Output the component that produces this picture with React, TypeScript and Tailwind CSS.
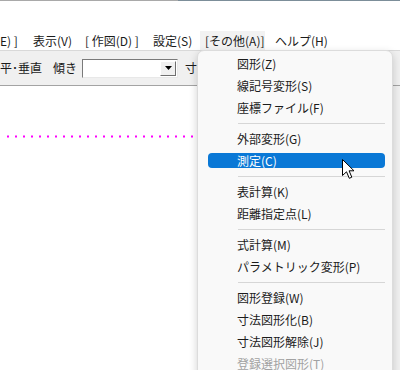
import React from "react";

type Item = { t: "i"; label: string; hl?: boolean; dis?: boolean } | { t: "s" };

const items: Item[] = [
  { t: "i", label: "図形(Z)" },
  { t: "i", label: "線記号変形(S)" },
  { t: "i", label: "座標ファイル(F)" },
  { t: "s" },
  { t: "i", label: "外部変形(G)" },
  { t: "i", label: "測定(C)", hl: true },
  { t: "s" },
  { t: "i", label: "表計算(K)" },
  { t: "i", label: "距離指定点(L)" },
  { t: "s" },
  { t: "i", label: "式計算(M)" },
  { t: "i", label: "パラメトリック変形(P)" },
  { t: "s" },
  { t: "i", label: "図形登録(W)" },
  { t: "i", label: "寸法図形化(B)" },
  { t: "i", label: "寸法図形解除(J)" },
  { t: "i", label: "登録選択図形(T)", dis: true },
];

export default function App() {
  return (
    <div className="relative w-[400px] h-[370px] overflow-hidden bg-white font-['Noto_Sans_CJK_JP','Noto_Sans',sans-serif] text-[12px] text-[#1b1b1b]">
      <div className="flex h-px">
        <div className="w-[178px] bg-[#a9a9a9]" />
        <div className="flex-1 bg-[#7c8e99]" />
      </div>
      <div className="h-[30px]" />
      {/* menu bar */}
      <div className="flex h-[19px] items-center leading-[19px] whitespace-nowrap">
        <div className="w-[33px] pl-0">E) ]</div>
        <div className="w-[52px]">表示(V)</div>
        <div className="w-[68px]">[ 作図(D) ]</div>
        <div className="w-[47px]">設定(S)</div>
        <div className="w-[65px] h-[19px] bg-[#f2f2f2] pl-[5px]">[その他(A)]</div>
        <div className="pl-[10px]">ヘルプ(H)</div>
      </div>
      {/* toolbar */}
      <div className="flex h-[36px] items-center border-t border-[#d9d9d9] border-b border-b-[#a3a3a3] bg-[#f0f0f0] whitespace-nowrap">
        <div className="w-[53px]">平･垂直</div>
        <div className="w-[29px]">傾き</div>
        <div className="flex h-[19px] w-[96px] border border-t-[#7a7a7a] border-l-[#7a7a7a] border-r-[#e8e8e8] border-b-[#e8e8e8] bg-white">
          <div className="flex-1" />
          <div className="m-[1px] flex w-[16px] items-center justify-center border border-t-[#ffffff] border-l-[#ffffff] border-r-[#6f6f6f] border-b-[#6f6f6f] bg-[#f0f0f0]">
            <svg width="7" height="4" viewBox="0 0 7 4"><path d="M0 0H7L3.5 4Z" fill="#000" /></svg>
          </div>
        </div>
        <div className="pl-[7px]">寸法</div>
      </div>
      {/* canvas */}
      <div className="flex h-[284px]">
        <div className="flex-1">
          <svg width="200" height="4" className="mt-[49px]">
            <line x1="7" y1="1.5" x2="200" y2="1.5" stroke="#ff00ff" strokeWidth="2" strokeDasharray="2 6" />
          </svg>
        </div>
        <div className="w-[7px] bg-[#f0f0f0]" />
      </div>

      {/* dropdown menu */}
      <div className="absolute left-[197px] top-[50px] w-[196px] h-[340px] rounded-t-[7px] border border-[#dcdcdc] bg-[#f9f9f9] pt-[2px] shadow-[0_3px_8px_rgba(0,0,0,0.18)]">
        {items.map((it, i) =>
          it.t === "s" ? (
            <div key={i} className="flex h-[9px] items-center pl-[40px] pr-[7px]">
              <div className="h-px w-full bg-[#d6d6d6]" />
            </div>
          ) : (
            <div key={i} className="relative h-[22px]">
              {it.hl && <div className="absolute left-[10px] right-[7px] top-[3px] h-[15px] rounded-[4px] bg-[#0a78d6]" />}
              <div
                className={
                  "relative pl-[39px] leading-[22px] whitespace-nowrap " +
                  (it.hl ? "text-white" : it.dis ? "text-[#a2a2a2]" : "text-[#1b1b1b]")
                }
              >
                {it.label}
              </div>
            </div>
          )
        )}
      </div>

      {/* mouse cursor */}
      <svg className="absolute left-[342px] top-[159px]" width="14" height="21" viewBox="0 0 14 21">
        <path d="M0.5 0.5 L0.5 16.5 L4.5 12.8 L7.3 19.3 L9.8 18.2 L7.1 11.8 L12 11.8 Z" fill="#fff" stroke="#000" strokeWidth="1" strokeLinejoin="miter" />
      </svg>
    </div>
  );
}
